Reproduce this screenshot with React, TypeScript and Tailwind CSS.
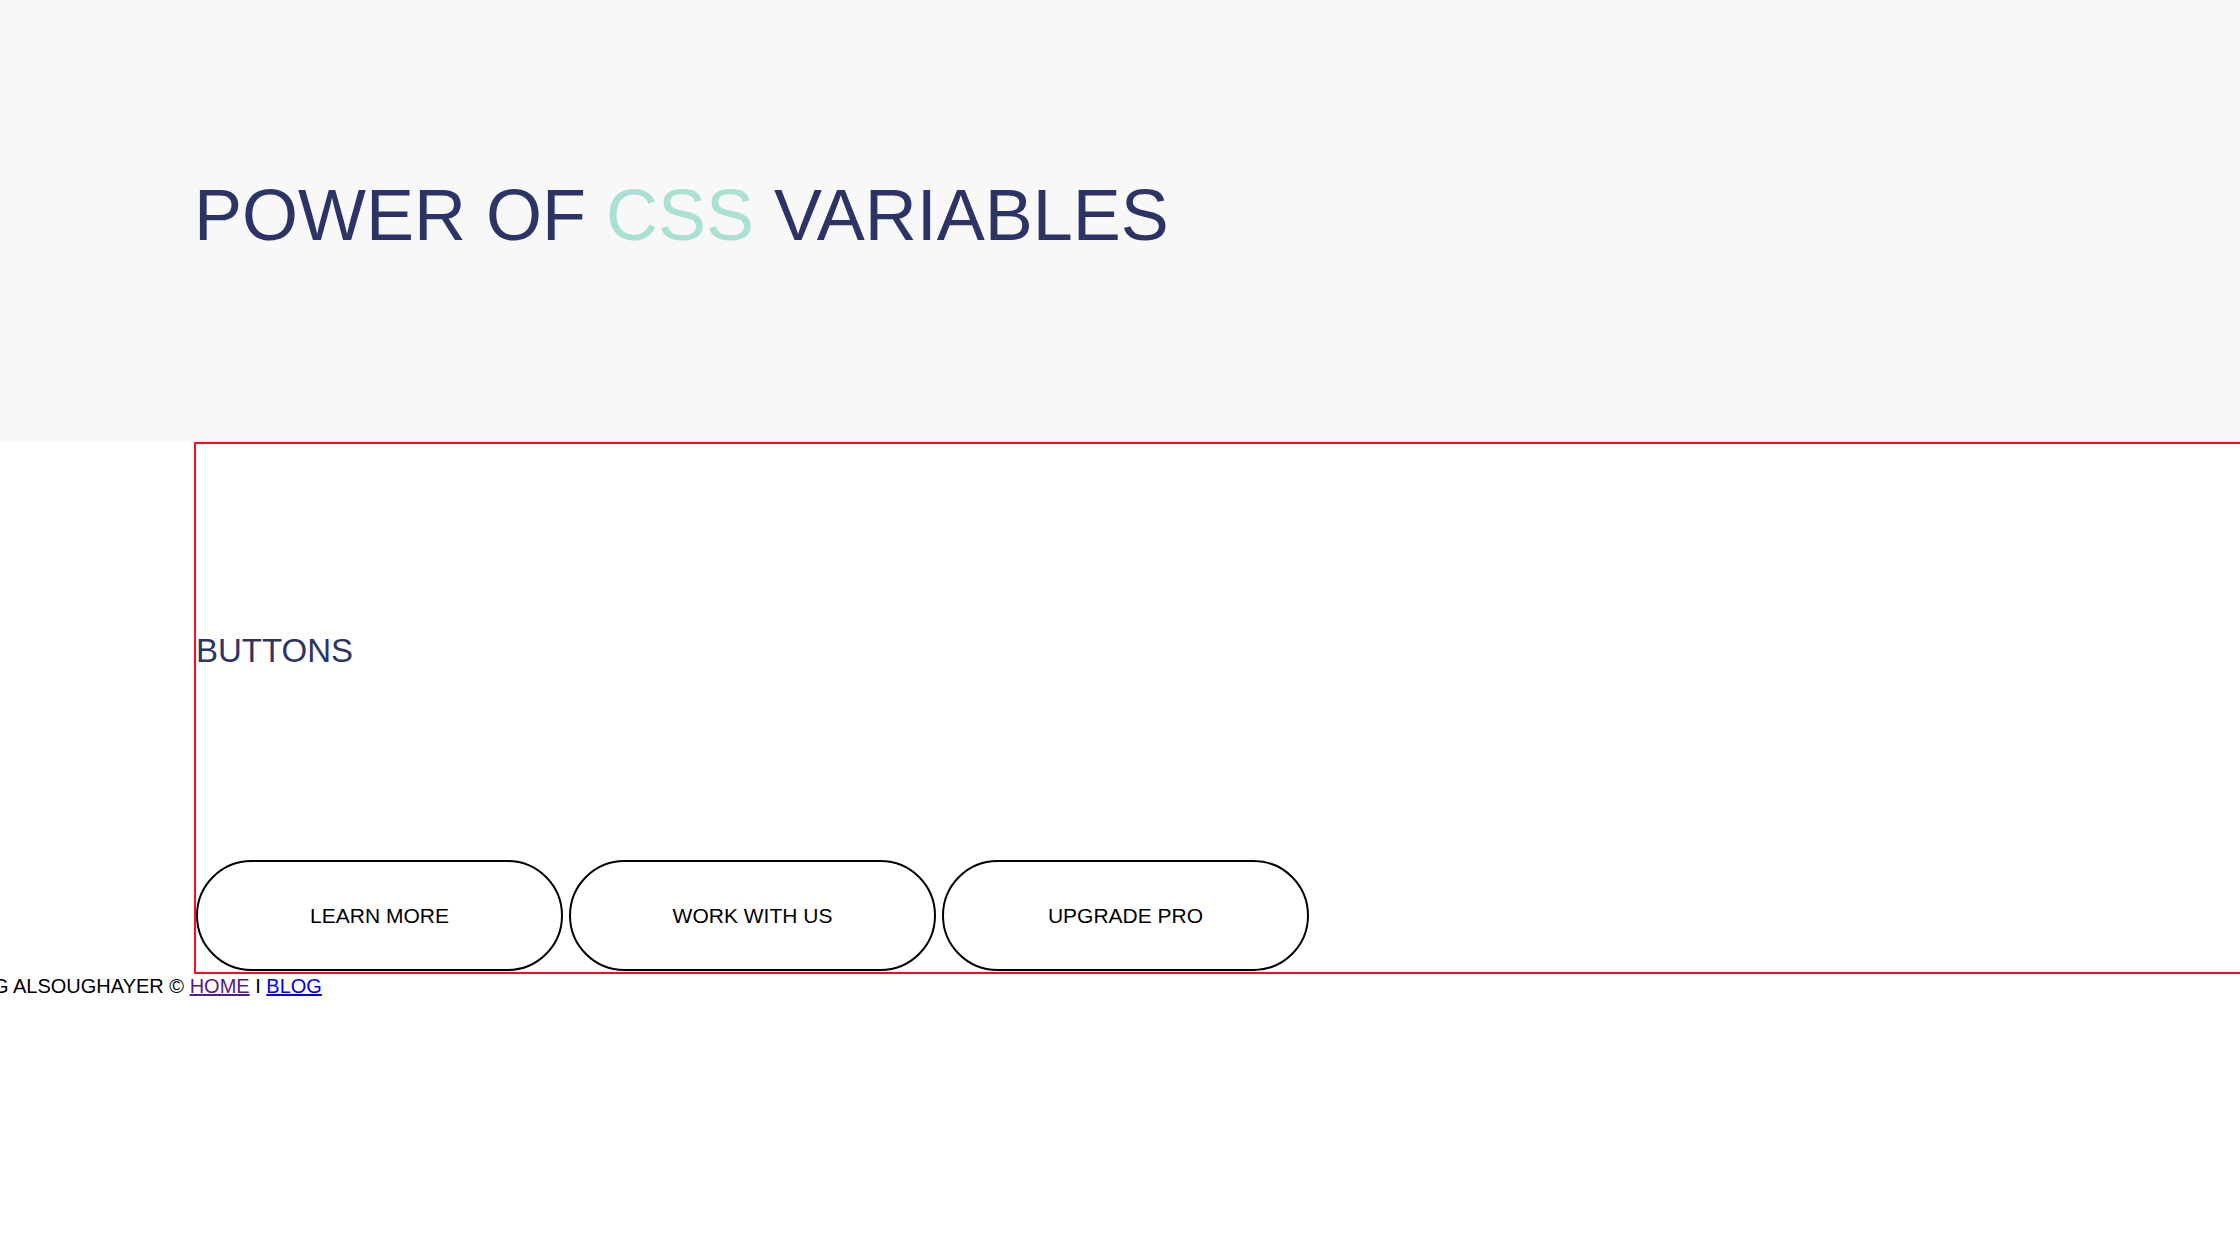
const buttons = ['LEARN MORE', 'WORK WITH US', 'UPGRADE PRO']

export default function App() {
  return (
    <div className="min-h-screen overflow-hidden bg-white font-['Liberation_Sans',Arial,sans-serif]">
      <header className="h-[442px] bg-[#f8f8f8] pl-[194px] pt-[179px]">
        <h1 className="text-[72px] leading-[72px] font-light text-[#2b3464] whitespace-nowrap">
          POWER OF <span className="text-[#aadfd4]">CSS</span> VARIABLES
        </h1>
      </header>

      <section className="ml-[194px] w-[2200px] h-[532px] border-2 border-[#ff0a1e]">
        <h2 className="mt-[190px] text-[33px] leading-[33px] text-[#2b3464]">BUTTONS</h2>
        <div className="mt-[193px] flex gap-[6px]">
          {buttons.map((label) => (
            <button
              key={label}
              className="w-[367px] h-[111px] rounded-full border-2 border-black bg-white text-[21px] text-black"
            >
              {label}
            </button>
          ))}
        </div>
      </section>

      <p className="-ml-[7px] text-[20px] leading-[24px] text-black whitespace-nowrap">
        G ALSOUGHAYER ©{' '}
        <a href="#" className="underline text-[#551a8b]">HOME</a> I{' '}
        <a href="#" className="underline text-[#0000ee]">BLOG</a>
      </p>
    </div>
  )
}
